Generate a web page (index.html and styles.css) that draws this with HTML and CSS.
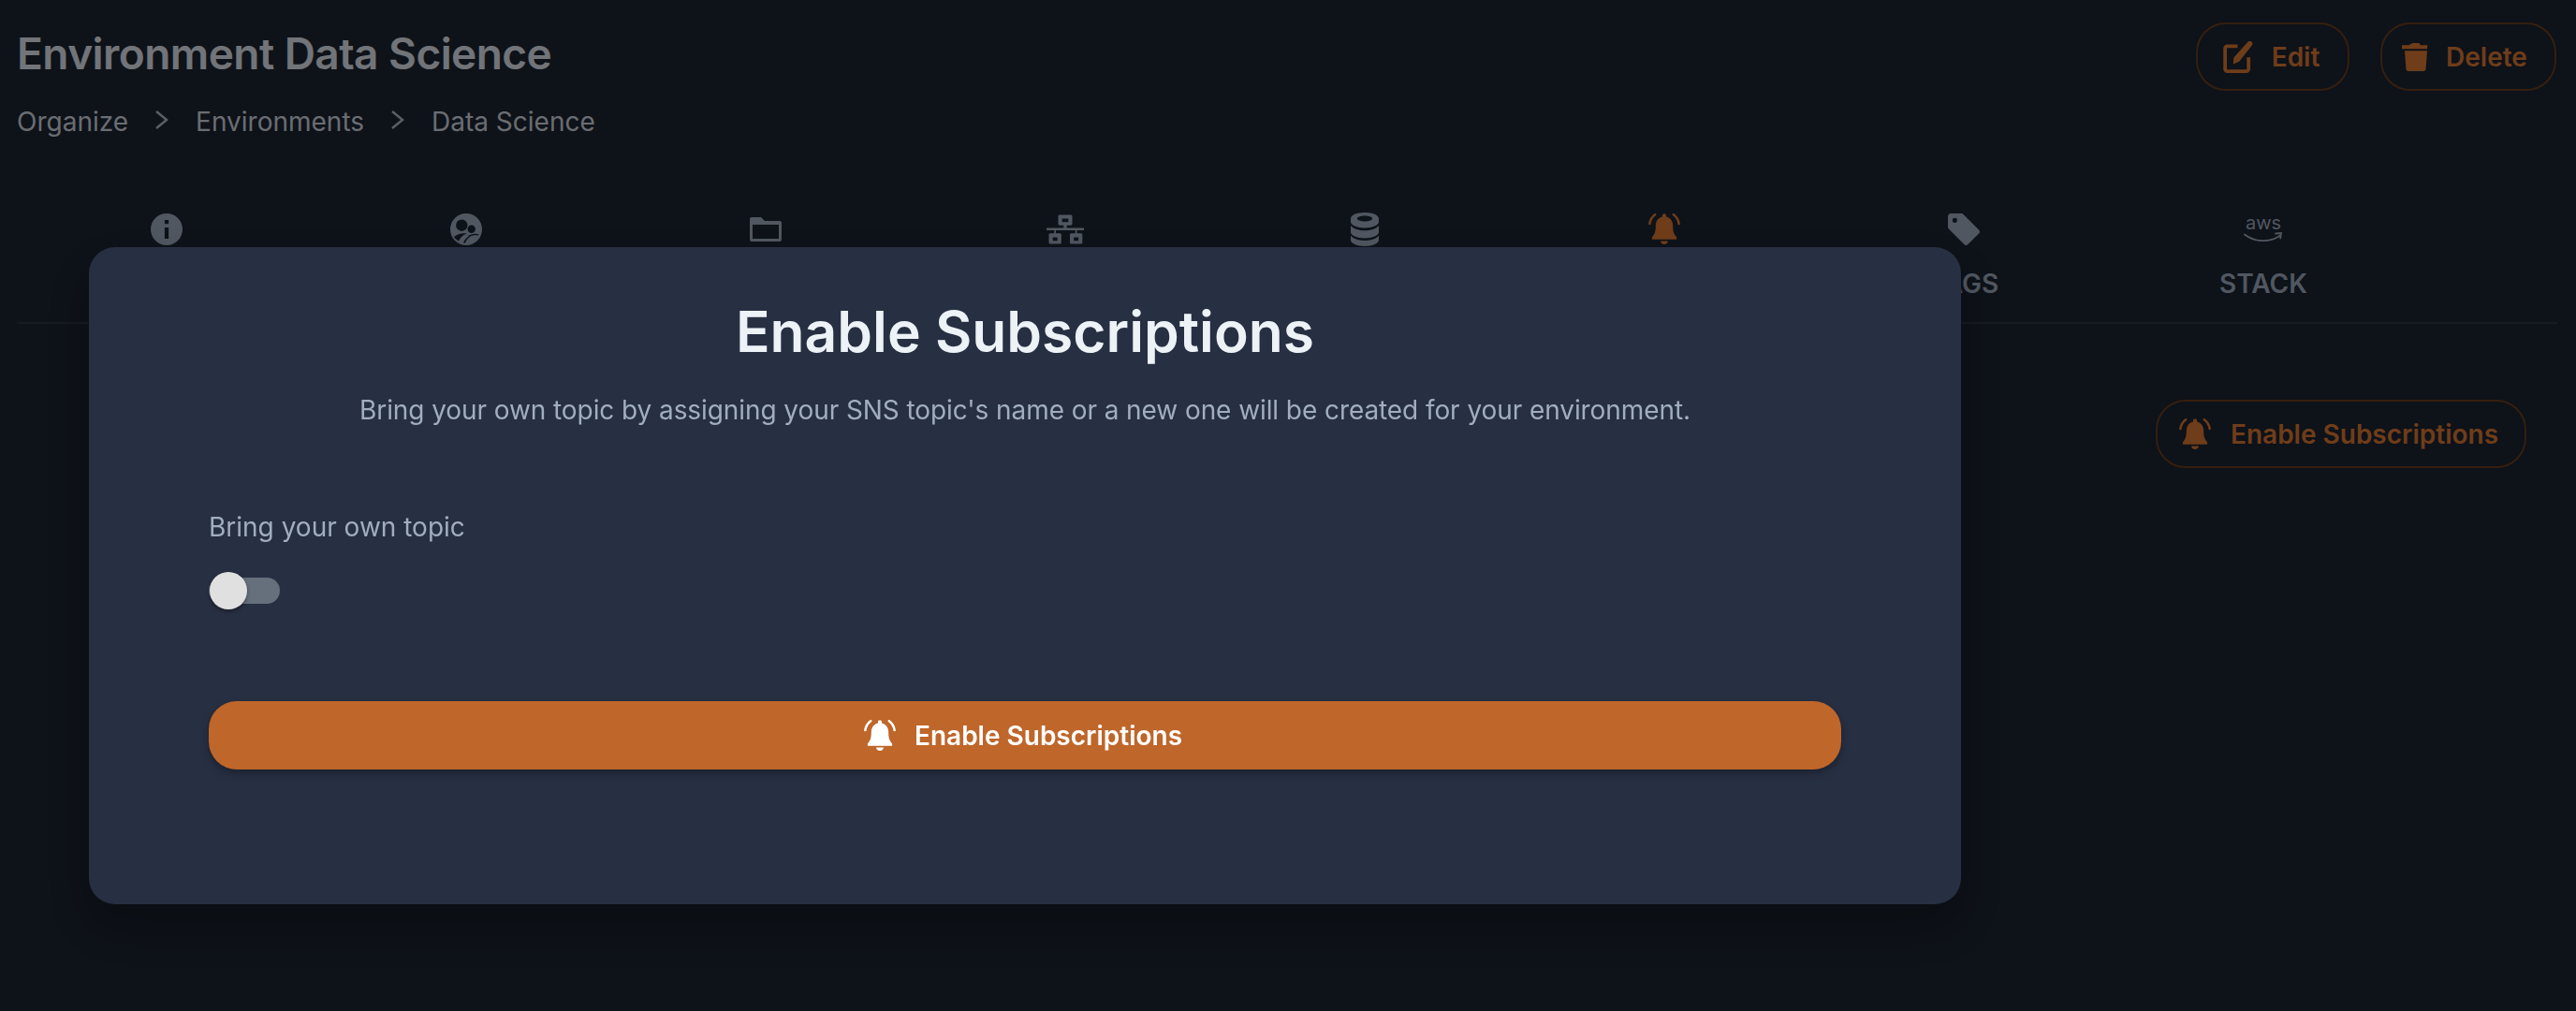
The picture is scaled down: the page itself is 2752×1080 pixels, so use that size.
FILE: index.html
```html
<!DOCTYPE html>
<html>
<head>
  <meta charset="utf-8">
  <title>Environment Data Science</title>
  <link rel="stylesheet" href="styles.css">
</head>
<body>
<svg class="sprite" xmlns="http://www.w3.org/2000/svg">
  <symbol id="bell" viewBox="2 2.5 20 20">
    <path fill="currentColor" d="M12 2.6c-.7 0-1.2.5-1.2 1.2v.8C8.200 5.200 6.600 7.400 6.600 10.200c0 3.800-.7 5.600-2.300 7.200v1.400h15.400v-1.400c-1.600-1.600-2.300-3.400-2.300-7.200 0-2.800-1.600-5-4.200-5.600v-.8c0-.7-.5-1.200-1.200-1.200z"/>
    <path fill="currentColor" d="M9.700 19.800h4.600c0 1.200-1 2.100-2.300 2.100s-2.300-.9-2.300-2.100z"/>
    <path fill="none" stroke="currentColor" stroke-width="1.500" stroke-linecap="round" d="M6.200 3.200C4.300 4.600 3.100 6.600 2.800 9M17.800 3.200c1.900 1.400 3.100 3.400 3.400 5.800"/>
  </symbol>
</svg>

<div class="page">
  <div class="head">
    <div>
      <h1 class="title">Environment Data Science</h1>
      <div class="crumbs">
        <span>Organize</span>
        <svg class="chev" viewBox="0 0 28 28"><path d="M8 5l11 9-11 9"/></svg>
        <span>Environments</span>
        <svg class="chev" viewBox="0 0 28 28"><path d="M8 5l11 9-11 9"/></svg>
        <span>Data Science</span>
      </div>
    </div>
    <div class="actions">
      <button class="btn-line btn-edit">
        <svg class="icon" viewBox="1.500 1 21.700 21.700">
          <path fill="none" stroke="currentColor" stroke-width="2.400" stroke-linejoin="round" d="M12 4.500H5a1.500 1.500 0 0 0-1.500 1.500v14A1.500 1.500 0 0 0 5 21.500h13a1.500 1.500 0 0 0 1.500-1.500v-8"/>
          <path fill="currentColor" d="M19.300 1.200c.7-.7 1.900-.3 2.400.3.600.7.700 1.600.1 2.300l-8.700 11.100-4.100 1.800.4-4.500z"/>
        </svg>
        Edit
      </button>
      <button class="btn-line btn-delete">
        <svg class="icon" viewBox="0.100 0.600 23.800 23.800">
          <path fill="currentColor" d="M9.500 2h5l.8 1.600h5.200v2.800h-19V3.600h5.200zM3.600 7.800h16.800l-1 13.700c-.1 1-.8 1.500-1.600 1.500H6.200c-.8 0-1.500-.5-1.600-1.500z"/>
        </svg>
        Delete
      </button>
    </div>
  </div>

  <div class="tabs">
    <div class="tab">
      <svg class="tab-icon" viewBox="0 0 24 24">
        <path fill="currentColor" fill-rule="evenodd" d="M12 0a12 12 0 1 0 0 24 12 12 0 0 0 0-24zm-1.500 5h3v3h-3zm0 5.500h3V19h-3z"/>
      </svg>
      <span>OVERVIEW</span>
    </div>
    <div class="tab">
      <svg class="tab-icon" viewBox="0 0 34 34">
        <path fill="currentColor" fill-rule="evenodd" d="M17 0a17 17 0 1 0 0 34 17 17 0 0 0 0-34zM12.300 6.500a6.200 6.200 0 1 1 0 12.400 6.200 6.200 0 0 1 0-12.400zm10.400 6a4.200 4.200 0 1 1 0 8.400 4.200 4.200 0 0 1 0-8.400zM4 25c4-3.500 9-4.500 14-3.500-4 1-7 4-9 8-2-1-3.800-2.500-5-4.500zm15-1c3-2 7-3 11.500-1.800l-1 1.500c-3-.8-6-.3-9 1.500zm-5 7.500c1-3 3-5.500 6-7l1 .8c-2.500 1.500-4 3.500-5 6.500z"/>
      </svg>
      <span>TEAMS</span>
    </div>
    <div class="tab">
      <svg class="tab-icon tab-icon-folder" viewBox="0 0 34 26">
        <path fill="currentColor" fill-rule="evenodd" d="M2 0h10l4 4h16a2 2 0 0 1 2 2v18a2 2 0 0 1-2 2H2a2 2 0 0 1-2-2V2a2 2 0 0 1 2-2zM3 8v15h28V8z"/>
      </svg>
      <span>DATASETS</span>
    </div>
    <div class="tab">
      <svg class="tab-icon tab-icon-wide" viewBox="0 0 24 24" preserveAspectRatio="none">
        <path fill="currentColor" fill-rule="evenodd" d="M8.500 1h7c.6 0 1 .4 1 1v6c0 .6-.4 1-1 1H13v2h11v1.700h-4.500v2.300h2.500c.6 0 1 .4 1 1v6c0 .6-.4 1-1 1h-6c-.6 0-1-.4-1-1v-6c0-.6.4-1 1-1h2.500v-2.300H6v2.300h2.500c.6 0 1 .4 1 1v6c0 .6-.4 1-1 1h-6c-.6 0-1-.4-1-1v-6c0-.6.4-1 1-1H5v-2.300H0V11h11V9H8.500c-.6 0-1-.4-1-1V2c0-.6.4-1 1-1zM10 3.800v2.700h4V3.800zM4 18v2.700h3V18zm13.500 0v2.700h3V18z"/>
      </svg>
      <span>NETWORKS</span>
    </div>
    <div class="tab">
      <svg class="tab-icon tab-icon-db" viewBox="1 0 22 24" preserveAspectRatio="none">
        <path fill="currentColor" fill-rule="evenodd" d="M12 0C5.900 0 1 1.900 1 4.300v2.400C1 9 5.900 11 12 11s11-2 11-4.300V4.300C23 1.900 18.100 0 12 0zm0 2.400c3.300 0 6 .9 6 2s-2.700 2-6 2-6-.9-6-2 2.700-2 6-2z"/>
        <path fill="currentColor" d="M1 9.300V14c0 2.400 4.900 4.300 11 4.300S23 16.400 23 14V9.300c-2 2.300-6.500 3.500-11 3.500S3 11.600 1 9.300z"/>
        <path fill="currentColor" d="M1 16.500v3.200C1 22.100 5.900 24 12 24s11-1.900 11-4.300v-3.200c-2 2.300-6.500 3.500-11 3.500S3 18.800 1 16.500z"/>
      </svg>
      <span>WAREHOUSES</span>
    </div>
    <div class="tab tab-active">
      <svg class="tab-icon"><use href="#bell"/></svg>
      <span>SUBSCRIPTIONS</span>
    </div>
    <div class="tab">
      <svg class="tab-icon" viewBox="0 0 24 24">
        <path fill="currentColor" fill-rule="evenodd" d="M2.300 0h8c.6 0 1.100.3 1.500.8L23.500 12.500c.7.700.7 1.800 0 2.500l-8.600 8.500c-.7.700-1.800.7-2.500 0L.8 11.900C.3 11.400 0 10.900 0 10.300v-8C0 1 1 0 2.300 0zm2.900 3.400a1.800 1.800 0 1 0 0 3.600 1.800 1.800 0 0 0 0-3.600z"/>
      </svg>
      <span>TAGS</span>
    </div>
    <div class="tab">
      <div class="aws">
        <span class="aws-word">aws</span>
        <svg class="aws-smile" viewBox="0 0 42 12">
          <path fill="none" stroke="currentColor" stroke-width="1.800" stroke-linecap="round" d="M1 2.500c11 8.500 27 9 38 1M34 1.500l6-.5-.8 5.500"/>
        </svg>
      </div>
      <span>STACK</span>
    </div>
  </div>

  <div class="panel">
    <button class="btn-line btn-enable">
      <svg class="icon"><use href="#bell"/></svg>
      Enable Subscriptions
    </button>
  </div>
</div>

<div class="backdrop">
  <div class="modal">
    <h2 class="modal-title">Enable Subscriptions</h2>
    <p class="modal-text">Bring your own topic by assigning your SNS topic's name or a new one will be created for your environment.</p>
    <div class="field-label">Bring your own topic</div>
    <div class="switch"><span class="switch-knob"></span></div>
    <button class="btn-fill">
      <svg class="icon"><use href="#bell"/></svg>
      Enable Subscriptions
    </button>
  </div>
</div>
</body>
</html>
```

FILE: styles.css
```css
body {
    margin: 0;
    height: 1080px;
    overflow: hidden;
    background: #1c2532;
    color: #e2e8f0;
    font-family: Inter, "Liberation Sans", sans-serif;
}

.sprite {
    display: none;
}

.page {
    padding: 24px 20px 0 18px;
}

.head {
    display: flex;
    justify-content: space-between;
    align-items: flex-start;
}

.title {
    margin: 0;
    font-size: 46px;
    line-height: 66px;
    font-weight: 600;
    letter-spacing: -0.55px;
}

.crumbs {
    display: flex;
    align-items: center;
    gap: 22px;
    margin-top: 20px;
    height: 40px;
    font-size: 28px;
    color: #d5dbe2;
}

.chev {
    width: 28px;
    height: 28px;
    margin-top: -5px;
    fill: none;
    stroke: #b4bfce;
    stroke-width: 2.500;
}

.actions {
    display: flex;
    gap: 33px;
    padding-right: 1px;
}

button {
    font-family: inherit;
    display: flex;
    align-items: center;
    justify-content: center;
    cursor: pointer;
}

.icon {
    width: 34px;
    height: 34px;
    flex: none;
}

.btn-line {
    height: 73px;
    border: 2px solid #6b3f1e;
    border-radius: 32px;
    background: transparent;
    color: #df7a32;
    font-size: 28px;
    font-weight: 600;
}

.btn-edit {
    width: 164px;
    gap: 19px;
    padding: 0 4px 0 0;
}

.btn-delete {
    width: 188px;
    gap: 15px;
    padding: 0 10px 0 0;
}

.tabs {
    display: flex;
    margin-top: 78px;
    padding-bottom: 24px;
    border-bottom: 2px solid #2d3748;
}

.tab {
    width: 320px;
    display: flex;
    flex-direction: column;
    align-items: center;
    gap: 24px;
    font-size: 28px;
    line-height: 34px;
    font-weight: 600;
    color: #a0aec0;
}

.tab-active {
    color: #df7a32;
}

.tab-icon {
    width: 34px;
    height: 34px;
    flex: none;
}

.tab-icon-folder {
    padding: 4px 0;
    height: 26px;
}

.tab-icon-wide {
    width: 40px;
}

.tab-icon-db {
    width: 30px;
    height: 36px;
    margin: -1px 0;
}

.aws {
    width: 42px;
    height: 34px;
    display: flex;
    flex-direction: column;
    align-items: center;
}

.aws-word {
    font-size: 20px;
    line-height: 20px;
    font-weight: 400;
}

.aws-smile {
    width: 42px;
    height: 12px;
}

.panel {
    display: flex;
    justify-content: flex-end;
    margin-top: 81px;
    padding-right: 33px;
}

.btn-enable {
    width: 396px;
    gap: 21px;
    padding: 0 5px 0 0;
}

.backdrop {
    position: fixed;
    top: 0;
    left: 0;
    right: 0;
    bottom: 0;
    padding: 264px 0 0 95px;
    background: rgba(0, 0, 0, 0.5);
}

.modal {
    width: 2000px;
    height: 702px;
    box-sizing: border-box;
    padding: 48px 128px 0;
    border-radius: 28px;
    background: #272f42;
    box-shadow: 0 24px 48px rgba(0, 0, 0, 0.25);
}

.modal-title {
    margin: 0;
    text-align: center;
    font-size: 60.500px;
    line-height: 84px;
    font-weight: 600;
    color: #edf2f7;
}

.modal-text {
    margin: 21px 0 0;
    text-align: center;
    font-size: 28px;
    line-height: 42px;
    letter-spacing: -0.08px;
    color: #a0aec0;
}

.field-label {
    margin-top: 84px;
    font-size: 28px;
    line-height: 40px;
    color: #a0aec0;
}

.switch {
    width: 76px;
    height: 28px;
    margin-top: 34px;
    border-radius: 14px;
    background: #666f7c;
    display: flex;
    align-items: center;
}

.switch-knob {
    width: 40px;
    height: 40px;
    margin-left: 1px;
    border-radius: 50%;
    background: #e0e0e0;
    box-shadow: 0 2px 4px rgba(0, 0, 0, 0.4);
}

.btn-fill {
    width: 100%;
    height: 73px;
    margin-top: 104px;
    padding: 0 4px 0 0;
    gap: 20px;
    border: 0;
    border-radius: 30px;
    background: #bf662a;
    color: #fff;
    font-size: 28px;
    font-weight: 600;
    box-shadow: 0 4px 8px rgba(0, 0, 0, 0.3);
}
```
